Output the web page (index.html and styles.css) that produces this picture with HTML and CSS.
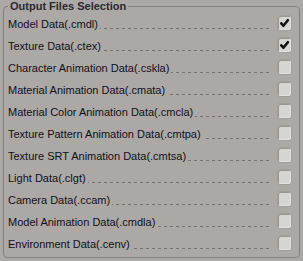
FILE: index.html
```html
<!DOCTYPE html>
<html>
<head>
<meta charset="utf-8">
<link rel="stylesheet" href="styles.css">
</head>
<body>
<fieldset class="group">
  <legend class="group-title">Output Files Selection</legend>
  <div class="row"><span class="label">Model Data(.cmdl)</span><span class="leader"></span><span class="check checked"><svg viewBox="0 0 15 16"><path d="M3.8 8.4 L6.2 11.2 L11.4 4.8" /></svg></span></div>
  <div class="row"><span class="label">Texture Data(.ctex)</span><span class="leader"></span><span class="check checked"><svg viewBox="0 0 15 16"><path d="M3.8 8.4 L6.2 11.2 L11.4 4.8" /></svg></span></div>
  <div class="row"><span class="label">Character Animation Data(.cskla)</span><span class="leader"></span><span class="check"></span></div>
  <div class="row"><span class="label">Material Animation Data(.cmata)</span><span class="leader"></span><span class="check"></span></div>
  <div class="row"><span class="label">Material Color Animation Data(.cmcla)</span><span class="leader"></span><span class="check"></span></div>
  <div class="row"><span class="label">Texture Pattern Animation Data(.cmtpa)</span><span class="leader"></span><span class="check"></span></div>
  <div class="row"><span class="label">Texture SRT Animation Data(.cmtsa)</span><span class="leader"></span><span class="check"></span></div>
  <div class="row"><span class="label">Light Data(.clgt)</span><span class="leader"></span><span class="check"></span></div>
  <div class="row"><span class="label">Camera Data(.ccam)</span><span class="leader"></span><span class="check"></span></div>
  <div class="row"><span class="label">Model Animation Data(.cmdla)</span><span class="leader"></span><span class="check"></span></div>
  <div class="row"><span class="label">Environment Data(.cenv)</span><span class="leader"></span><span class="check"></span></div>
</fieldset>
</body>
</html>
```
FILE: styles.css
```css
html, body {
  margin: 0;
  padding: 0;
  background: #aca8a5;
  width: 303px;
  height: 261px;
  overflow: hidden;
}
body {
  font-family: "Liberation Sans", Arial, sans-serif;
  font-size: 11px;
  color: #10101c;
}
.group {
  margin: 0 3px 0 3px;
  padding: 0 7px 3px 4px;
  border: 1px solid #84807d;
  border-radius: 4px;
  min-width: 0;
}
.group-title {
  padding: 0 2px;
  font-weight: bold;
  font-size: 11px;
  line-height: 12px;
  color: #2a2a30;
}
.row {
  display: flex;
  align-items: center;
  height: 22px;
}
.label {
  white-space: nowrap;
  line-height: 20px;
  padding-top: 2px;
  height: 20px;
}
.leader {
  flex: 1;
  align-self: flex-start;
  margin-top: 16px;
  margin-left: 2px;
  margin-right: 8px;
  height: 1px;
  background: repeating-linear-gradient(to left, #76726f 0 3px, transparent 3px 6px);
}
.check {
  box-sizing: border-box;
  width: 15px;
  height: 16px;
  border: 1px solid #a29e9a;
  border-radius: 3px;
  background: #d7d5d2;
  box-shadow: inset 1px 1px 0 #9a9692, inset -1px -1px 0 #e4e2e0;
  display: flex;
}
.check svg {
  width: 100%;
  height: 100%;
}
.check path {
  fill: none;
  stroke: #111;
  stroke-width: 3;
  stroke-linecap: round;
  stroke-linejoin: round;
}
```
